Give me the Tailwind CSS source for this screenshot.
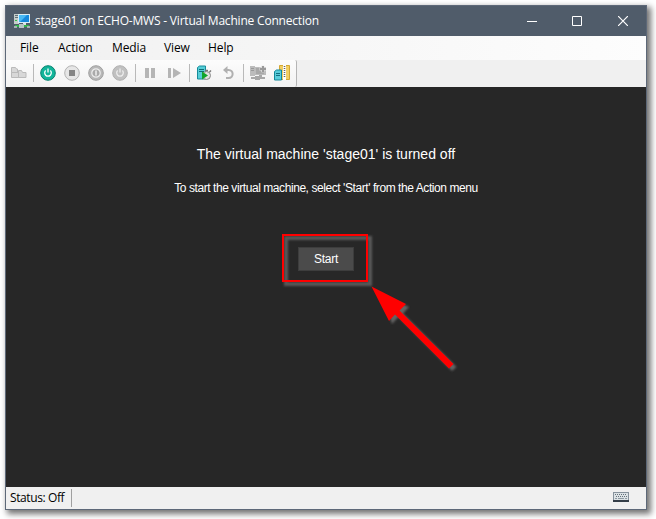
<!DOCTYPE html>
<html lang="en">
<head>
<meta charset="utf-8">
<title>stage01 on ECHO-MWS - Virtual Machine Connection</title>
<script src="https://cdn.jsdelivr.net/npm/@tailwindcss/browser@4"></script>
</head>
<body class="w-[656px] h-[519px] overflow-hidden bg-white p-[5px] text-[12px] text-black font-['Open_Sans','Noto_Sans',sans-serif]">
<main class="relative flex h-[505px] w-[642px] flex-col border border-[#5d6878] bg-[#f0f0f0] shadow-[3px_3px_6px_1px_rgba(0,0,0,0.55)]">
  <header class="flex h-[30px] shrink-0 items-center bg-[#505c6a] text-white">
    <svg class="ml-2 size-4 shrink-0" viewBox="0 0 16 16">
      <path d="M0 1h5v10H0z" fill="#c5ccca"/><path d="M1 2h3v1H1zM1 4h3v1H1z" fill="#607078"/><path d="M1 7h2v1H1z" fill="#35c44a"/>
      <path d="M4 1h12v9H4z" fill="#d7edf7"/><path d="M5 2h10v7H5z" fill="#1688dc"/><path d="M5 2h8L6 9H5z" fill="#49b9f5"/>
      <path d="M9 10h3v2H9z" fill="#dce4e6"/><path d="M1 12h14v2H1z" fill="#31b74b"/><path d="M5 11h5v4H5z" fill="#b5c5c5"/><path d="M0 13h3v2H0zM13 13h3v2h-3z" fill="#a5b2b2"/>
    </svg>
    <h1 class="ml-[5px] whitespace-nowrap text-[12px] leading-4 tracking-[-0.2px]">stage01 on ECHO-MWS - Virtual Machine Connection</h1>
    <div class="ml-auto mr-[18px] flex items-center gap-[35px]">
      <svg class="h-[11px] w-[10px]" viewBox="0 0 10 11"><path d="M0 5.5h10" stroke="white"/></svg>
      <svg class="size-[10px]" viewBox="0 0 10 10"><path d="M.5.5h9v9h-9z" fill="none" stroke="white"/></svg>
      <svg class="ml-px size-[10px]" viewBox="0 0 10 10"><path d="M0 0l10 10M10 0L0 10" stroke="white" stroke-width="1.2"/></svg>
    </div>
  </header>
  <nav class="flex h-6 shrink-0 items-center bg-linear-to-r from-[#f0f0f0] to-[#fdfdfd] pl-[15px] leading-4 tracking-[-0.1px]">
    <span class="-ml-px w-[38px]">File</span><span class="w-[54px]">Action</span><span class="w-[52px]">Media</span><span class="w-[44px]">View</span><span>Help</span>
  </nav>
  <div class="flex h-[27px] shrink-0">
    <div class="flex w-[291px] items-center rounded-r-[2px] border-r border-[#b5b5b5] bg-linear-to-b from-[#fcfcfc] to-[#f2f2f2] pb-[2px] pl-[5px]">
      <svg class="size-4 shrink-0" viewBox="0 0 16 16"><path d="M.5 2.500h4l1 1.500h1v3.500h-6zM.5 7.500h7v5h-7zM7.500 7.500V5.500h3l1 2h3.500v5H7.500z" fill="#d8d8d8" stroke="#bababa"/></svg>
      <i class="ml-[6px] h-[18px] w-px bg-[#b9b9b9]"></i>
      <svg class="ml-[6px] size-4 shrink-0" viewBox="0 0 16 16"><circle cx="8" cy="8" r="7.300" fill="#12b59a" stroke="#078270"/><path d="M5.700 5.500a3.300 3.300 0 1 0 4.600 0M8 3.500v4" fill="none" stroke="white" stroke-width="1.300"/></svg>
      <svg class="ml-2 size-4 shrink-0" viewBox="0 0 16 16"><circle cx="8" cy="8" r="7.300" fill="#e6e6e6" stroke="#b3b3b3"/><path d="M5 5h6v6H5z" fill="#858585"/></svg>
      <svg class="ml-2 size-4 shrink-0" viewBox="0 0 16 16"><circle cx="8" cy="8" r="7.300" fill="#b8b8b8" stroke="#a0a0a0"/><circle cx="8" cy="8" r="4.200" fill="#aaa" stroke="#eee" stroke-width="1.200"/><path d="M8 5.500v5" stroke="#eee" stroke-width="1.500"/></svg>
      <svg class="ml-2 size-4 shrink-0" viewBox="0 0 16 16"><circle cx="8" cy="8" r="7.300" fill="#c0c0c0" stroke="#b0b0b0"/><path d="M5.700 5.500a3.300 3.300 0 1 0 4.600 0M8 3.500v4" fill="none" stroke="#ececec" stroke-width="1.300"/></svg>
      <i class="ml-[7px] h-[18px] w-px bg-[#b9b9b9]"></i>
      <svg class="ml-[7px] size-4 shrink-0" viewBox="0 0 16 16"><path d="M2 3h4v10H2zM8 3h4v10H8z" fill="#b5b5b5"/></svg>
      <svg class="ml-2 size-4 shrink-0" viewBox="0 0 16 16"><path d="M1 3h3v10H1zM6 3l8 5-8 5z" fill="#b5b5b5"/></svg>
      <i class="ml-[6px] h-[18px] w-px bg-[#b9b9b9]"></i>
      <svg class="ml-[6px] size-4 shrink-0" viewBox="0 0 16 16"><path d="M1.500 2.500l2-1.500h6v13h-8z" fill="#56ced8" stroke="#168c9a"/><path d="M3 4.500h5M3 6.500h5" stroke="#106d78"/><circle cx="10.500" cy="10.500" r="4" fill="#e2e2e2" stroke="#888"/><path d="M9 5.500h3M13.500 7l1.500-1.500" stroke="#777" stroke-width="1.500"/><path d="M6 6.500l6 4-6 4z" fill="#10a52a"/></svg>
      <svg class="ml-[9px] size-4 shrink-0" viewBox="0 0 16 16"><path d="M3 5h4.500c5.500 0 5.500 8 0 8H5" fill="none" stroke="#b0b0b0" stroke-width="2"/><path d="M6.500 1v8L2 5z" fill="#b0b0b0"/></svg>
      <i class="ml-[6px] h-[18px] w-px bg-[#b9b9b9]"></i>
      <svg class="ml-[6px] size-4 shrink-0" viewBox="0 0 16 16"><path d="M0 1h5v10H0zM5 2h11v8H5z" fill="#bcbcbc"/><path d="M6 3h8v6H6zM9 10h3v2H9zM1 12h14v2H1zM5 11h5v4H5z" fill="#a8a8a8"/><path d="M1 3.500h3M1 5.500h3" stroke="#999"/><path d="M9.500 4H16M12.800 .8v6.400" stroke="#e2e2e2" stroke-width="3"/><path d="M10 4h6M13 1v6" stroke="#999" stroke-width="2"/></svg>
      <svg class="ml-2 size-4 shrink-0" viewBox="0 0 16 16"><path d="M5.500.5h10v14h-10z" fill="#f3cf63" stroke="#d4a832"/><path d="M10.500 0v15" stroke="white" stroke-width="3"/><path d="M10.500 1v11" stroke="#666" stroke-width="1.600" stroke-dasharray="1 1"/><path d="M.5 6.500l2-1.500h5v10h-7z" fill="#58ccda" stroke="#128799"/><path d="M2 8.500h4M2 10.500h4" stroke="#106e80"/></svg>
    </div>
  </div>
  <section class="flex h-[400px] shrink-0 flex-col items-center bg-[#272727] text-white font-['Liberation_Sans',sans-serif]">
    <h2 class="mt-[57px] whitespace-nowrap text-[14px] leading-5 tracking-[0.01px]">The virtual machine 'stage01' is turned off</h2>
    <p class="mt-4 whitespace-nowrap text-[12px] leading-4 tracking-[-0.43px]">To start the virtual machine, select 'Start' from the Action menu</p>
    <button class="mt-[51px] h-6 w-14 border border-[#3d3d3d] bg-[#4b4b4b] text-[12px] tracking-[-0.3px]">Start</button>
  </section>
  <footer class="flex h-[22px] shrink-0 items-center pl-[4px] leading-4">
    <span class="w-[61px] whitespace-nowrap tracking-[-0.4px]">Status: Off</span><i class="h-[18px] w-px bg-[#a0a0a0]"></i>
    <svg class="ml-auto mr-[17px] -mt-[2px] h-[10px] w-4" viewBox="0 0 16 10"><path d="M0 0h16v10H0z" fill="#87929c"/><path d="M1 1h14v7H1z" fill="#dce2e5"/><path d="M2 2.500h12M3 4.500h11" stroke="#65717a" stroke-dasharray="1 1"/><path d="M2 6.500h2m1 0h6m1 0h2" stroke="#8f9ba3"/><path d="M0 8h16v2H0z" fill="#343e48"/></svg>
  </footer>
  <svg class="pointer-events-none absolute left-[270px] top-[220px] h-[160px] w-[200px]" viewBox="276 226 200 160">
    <defs><filter id="soft" x="-20%" y="-20%" width="150%" height="150%"><feGaussianBlur stdDeviation="1"/></filter></defs>
    <g filter="url(#soft)" transform="translate(3 3)"><path d="M283 235h84v46h-84z" fill="none" stroke="#585858" stroke-width="4"/><path d="M380 293l26 11-6 6.500 53.500 53.500-4.500 4-53.500-54-6.500 7z" fill="#646464"/></g>
    <path d="M283 235h84v46h-84z" fill="none" stroke="#f00" stroke-width="2"/>
    <path d="M371.500 286.500L406 304l-6.500 6.500 54 53.500-4.500 4.500-54-54-6 6.500z" fill="#f00"/>
  </svg>
</main>
</body>
</html>
